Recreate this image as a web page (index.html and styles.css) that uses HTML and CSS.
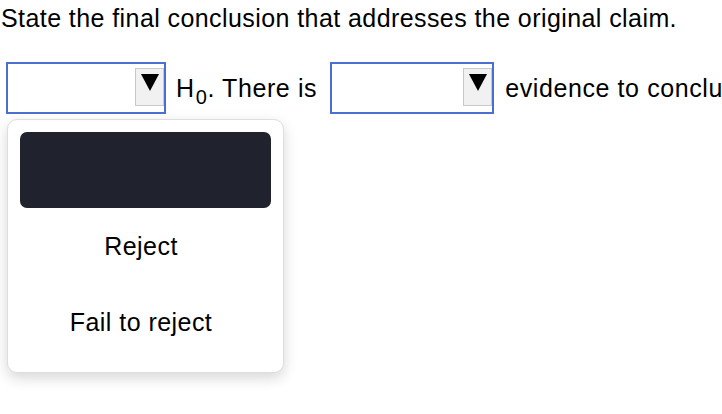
FILE: index.html
```html
<!DOCTYPE html>
<html lang="en">
<head>
<meta charset="UTF-8">
<meta name="viewport" content="width=device-width, initial-scale=1.0">
<title>Final Conclusion</title>
<link rel="stylesheet" href="styles.css">
</head>
<body>
<p class="prompt">State the final conclusion that addresses the original claim.</p>

<div class="answer-row">
    <div class="select-box">
        <span class="arrow-btn"><span class="arrow"></span></span>
    </div>
    <span class="text">H<sub>0</sub>. There is</span>
    <div class="select-box wide">
        <span class="arrow-btn"><span class="arrow"></span></span>
    </div>
    <span class="text">evidence to conclude that the claim is true.</span>
</div>

<div class="choice-list">
    <div class="choice highlighted"></div>
    <div class="choice">Reject</div>
    <div class="choice">Fail to reject</div>
</div>
</body>
</html>
```

FILE: styles.css
```css
body {
    font-family: "Liberation Sans", Arial, sans-serif;
    margin: 0;
    padding: 0 0 0 1px;
    min-height: 414px;
    background-color: #fff;
    color: #000;
}
.prompt {
    margin: 0;
    padding-top: 3px;
    font-size: 25px;
    letter-spacing: 0.42px;
    line-height: 30px;
    white-space: nowrap;
}
.answer-row {
    display: flex;
    align-items: center;
    gap: 10px;
    margin-top: 29px;
    padding-left: 5px;
    white-space: nowrap;
    font-size: 25px;
    letter-spacing: 0.6px;
}
.select-box {
    flex: none;
    width: 160px;
    height: 52px;
    border: 2px solid #4a6fcf;
    box-sizing: border-box;
    display: flex;
    justify-content: flex-end;
    align-items: flex-start;
    padding-top: 4px;
}
.select-box.wide {
    width: 164px;
    margin-left: 3px;
    margin-right: 1px;
}
.arrow-btn {
    width: 29px;
    height: 38px;
    background-color: #f1f1f1;
    border: 1px solid #c9c9c9;
    box-sizing: border-box;
    display: flex;
    justify-content: center;
    padding-top: 5px;
}
.arrow {
    width: 0;
    height: 0;
    border-left: 9px solid transparent;
    border-right: 9px solid transparent;
    border-top: 17px solid #000;
}
.text sub {
    font-size: 20px;
    vertical-align: -7px;
    line-height: 0;
    margin-left: 1px;
}
.choice-list {
    width: 277px;
    margin: 5px 0 0 6px;
    box-sizing: border-box;
    padding: 12px;
    background-color: #fff;
    border: 1px solid #dedede;
    border-radius: 10px;
    box-shadow: 0 5px 14px rgba(0, 0, 0, 0.16);
    font-size: 25px;
    letter-spacing: 0.45px;
}
.choice {
    height: 76px;
    display: flex;
    align-items: center;
    justify-content: center;
    padding-right: 9px;
    border-radius: 7px;
}
.choice.highlighted {
    background-color: #20232d;
}
```
